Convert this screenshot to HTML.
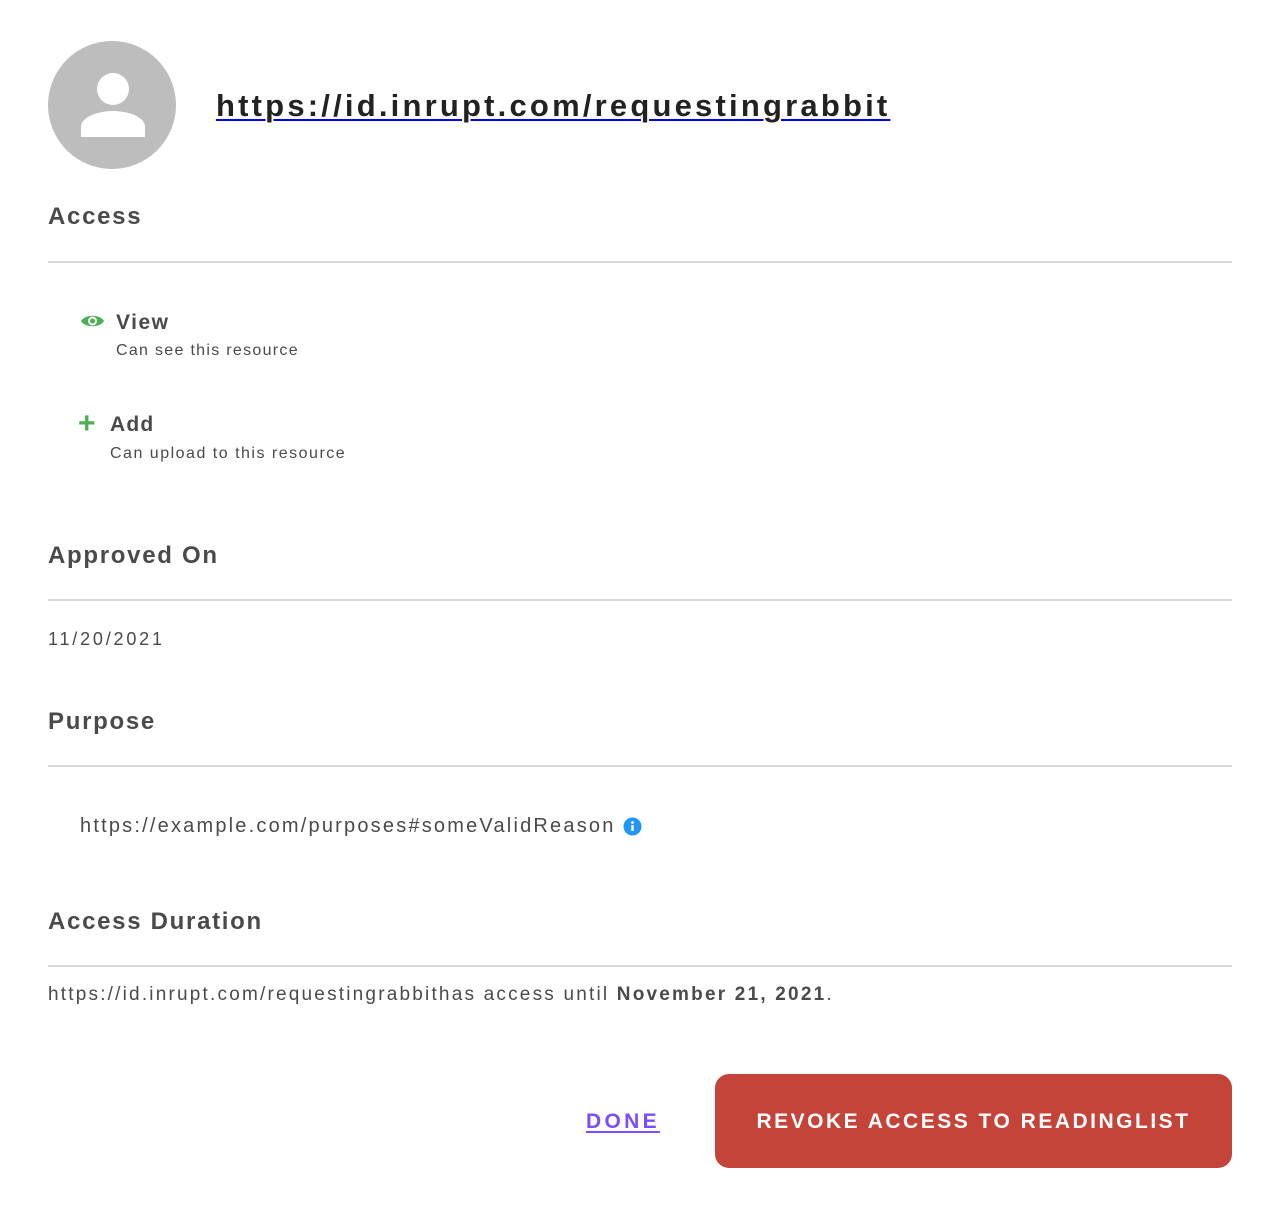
<!DOCTYPE html>
<html><head><style>
body{margin:0;width:1278px;height:1206px;background:#fff;font-family:"Liberation Sans",sans-serif;color:#4a4a4a;position:relative;overflow:hidden}
.a{position:absolute;white-space:nowrap}
h2{position:absolute;left:48px;margin:0;font-size:24px;font-weight:bold;color:#4a4a4a;letter-spacing:1.7px}
.hr{position:absolute;left:48px;width:1184px;height:2px;background:#d8d8d8}
</style></head><body>
<svg class="a" style="left:48px;top:41px" width="128" height="128" viewBox="0 0 128 128">
<circle cx="64" cy="64" r="64" fill="#bdbdbd"/>
<circle cx="65" cy="48" r="16" fill="#fff"/>
<path d="M33 96 V86 C33 76 50 70 65 70 C80 70 97 76 97 86 V96 Z" fill="#fff"/>
</svg>
<div class="a" style="left:216px;top:88px;font-size:31px;font-weight:bold;color:#222;letter-spacing:3.2px;text-decoration:underline;text-decoration-color:#0000ee;text-decoration-thickness:2px;text-underline-offset:3px">https://id.inrupt.com/requestingrabbit</div>
<h2 style="top:203px">Access</h2>
<div class="hr" style="top:261px"></div>
<svg class="a" style="left:80px;top:313px" width="25" height="16" viewBox="0 0 25 16"><path d="M1 8 C5 1 20 1 24 8 C20 15 5 15 1 8Z" fill="#4caf50"/><circle cx="12.5" cy="8" r="4.5" fill="#fff"/><circle cx="12.5" cy="8" r="2.5" fill="#4caf50"/></svg>
<div class="a" style="left:116px;top:311px;font-size:21px;font-weight:bold;letter-spacing:1.5px">View</div>
<div class="a" style="left:116px;top:342px;font-size:16px;letter-spacing:1.3px">Can see this resource</div>
<div class="a" style="left:78px;top:409px;font-size:30px;font-weight:bold;color:#4caf50;line-height:30px">+</div>
<div class="a" style="left:110px;top:413px;font-size:21px;font-weight:bold;letter-spacing:1.2px">Add</div>
<div class="a" style="left:110px;top:445px;font-size:16px;letter-spacing:1.5px">Can upload to this resource</div>
<h2 style="top:542px">Approved On</h2>
<div class="hr" style="top:599px"></div>
<div class="a" style="left:48px;top:629px;font-size:18px;letter-spacing:2.8px">11/20/2021</div>
<h2 style="top:708px">Purpose</h2>
<div class="hr" style="top:765px"></div>
<div class="a" style="left:80px;top:815px;font-size:20px;letter-spacing:2.2px">https://example.com/purposes#someValidReason</div>
<svg class="a" style="left:623px;top:817px" width="19" height="19" viewBox="0 0 19 19"><circle cx="9.5" cy="9.5" r="9" fill="#2196f3"/><rect x="8.3" y="8" width="2.4" height="6" fill="#fff"/><circle cx="9.5" cy="5.5" r="1.4" fill="#fff"/></svg>
<h2 style="top:908px">Access Duration</h2>
<div class="hr" style="top:965px"></div>
<div class="a" style="left:48px;top:984px;font-size:19px;letter-spacing:2.2px">https://id.inrupt.com/requestingrabbithas access until <b>November 21, 2021</b>.</div>
<div class="a" style="left:586px;top:1110px;font-size:21px;font-weight:bold;color:#7c4dff;letter-spacing:3.3px;text-decoration:underline;text-underline-offset:3px">DONE</div>
<div class="a" style="left:715px;top:1074px;width:517px;height:94px;border-radius:14px;background:#c5443a;color:#fff;font-size:21px;font-weight:bold;letter-spacing:2.5px;text-align:center;line-height:96px">REVOKE ACCESS TO READINGLIST</div>
</body></html>
